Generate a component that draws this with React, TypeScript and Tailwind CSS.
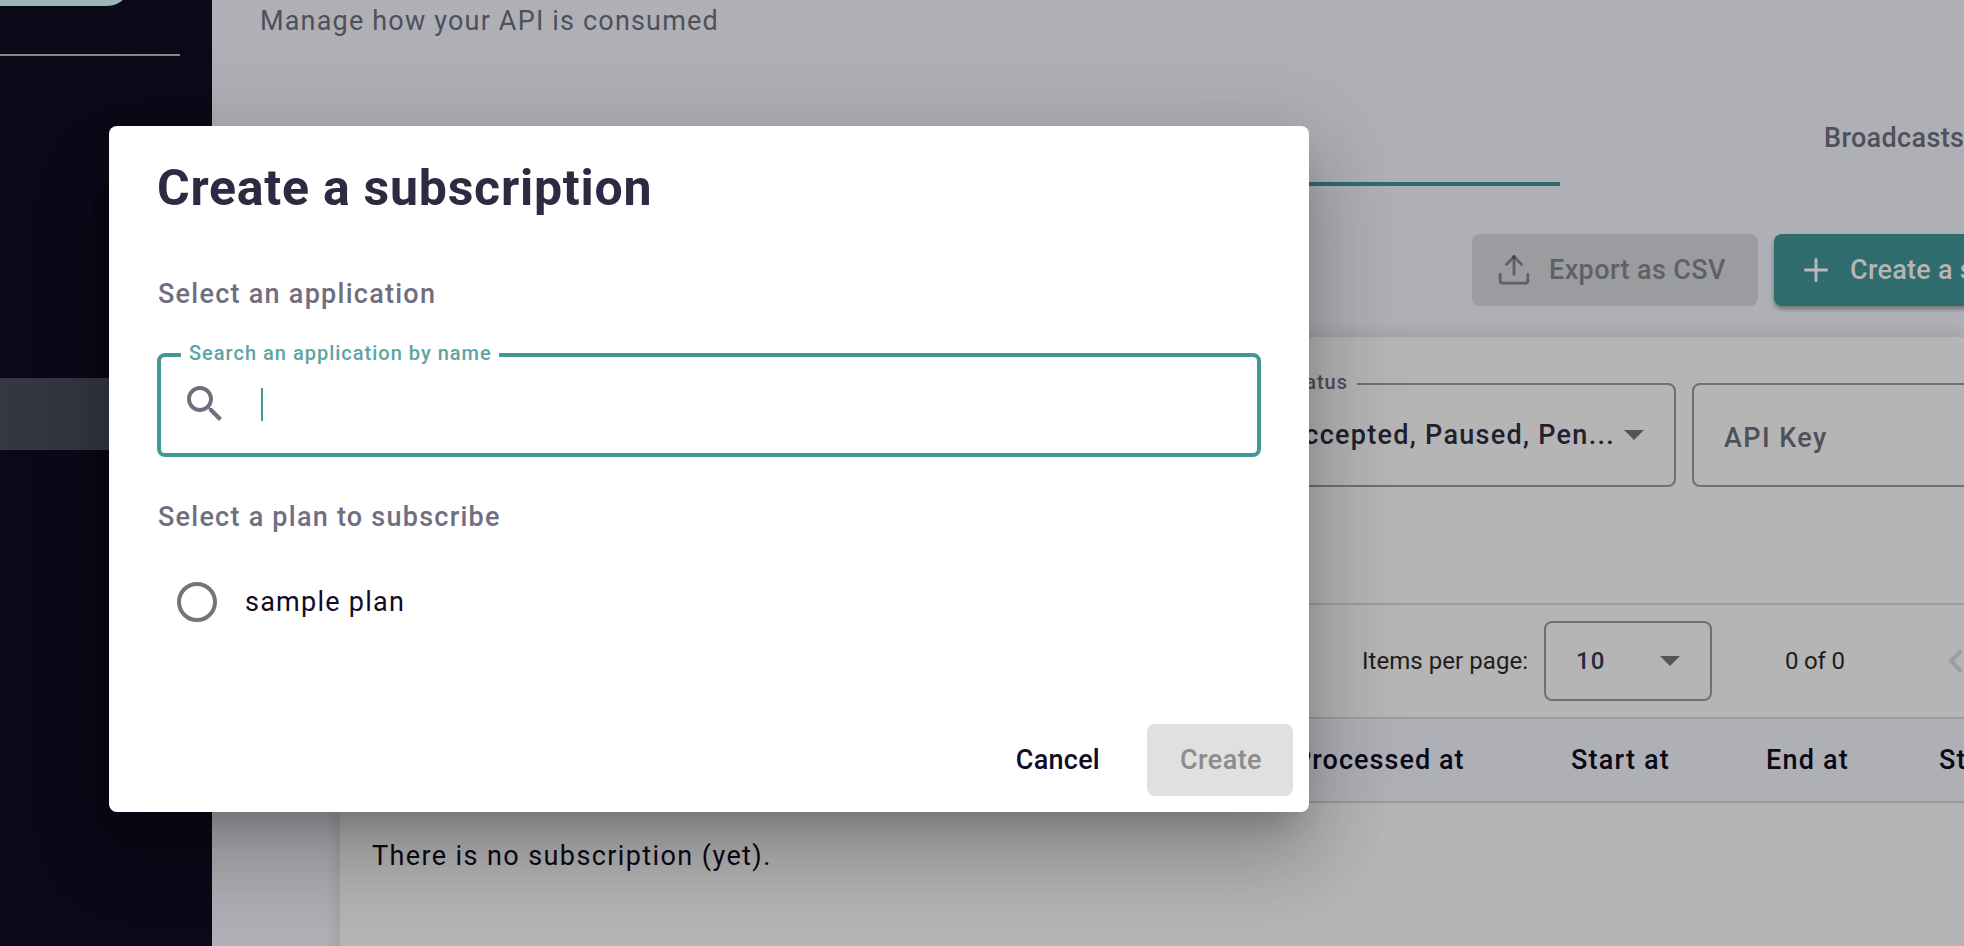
import type { ReactNode } from "react";

function UploadIcon() {
  return (
    <svg width="32" height="32" viewBox="0 0 32 32" fill="none" stroke="#606163" strokeWidth="2.8" strokeLinecap="round" strokeLinejoin="round">
      <path d="M2.2 20.5v6.3c0 1.5 1 2.4 2.4 2.4h22.8c1.4 0 2.4-.9 2.4-2.4v-6.3" />
      <path d="M8.4 10.4 16 2.8l7.6 7.6" />
      <path d="M16 3v17.6" />
      <circle cx="16" cy="3.2" r="0.9" stroke="#404143" strokeWidth="2" />
    </svg>
  );
}

function PlusIcon() {
  return (
    <svg width="26" height="26" viewBox="0 0 26 26" fill="none" stroke="#b7b9ba" strokeWidth="3" strokeLinecap="round">
      <path d="M13 2.4v21.2M2.4 13h21.2" />
    </svg>
  );
}

function SearchIcon() {
  return (
    <svg width="48" height="48" viewBox="0 0 24 24" fill="#706e7f">
      <path d="M15.5 14h-.79l-.28-.27C15.41 12.59 16 11.11 16 9.5 16 5.91 13.09 3 9.5 3S3 5.91 3 9.5 5.91 16 9.5 16c1.61 0 3.09-.59 4.23-1.57l.27.28v.79l5 4.99L20.49 19l-4.99-5zm-6 0C7.01 14 5 11.99 5 9.5S7.01 5 9.5 5 14 7.01 14 9.5 11.99 14 9.5 14z" />
    </svg>
  );
}

function Caret() {
  return (
    <svg width="20" height="10" viewBox="0 0 20 10" fill="#555555">
      <path d="M0 0h20L10 10z" />
    </svg>
  );
}

function OutlinedField({ label, className, children }: { label?: ReactNode; className: string; children: ReactNode }) {
  return (
    <div className={`relative flex shrink-0 items-center rounded-lg border-2 border-[#707070] ${className}`}>
      {label}
      {children}
    </div>
  );
}

function Sidebar() {
  return (
    <aside className="flex w-[212px] shrink-0 flex-col bg-[#0c0919]">
      <div className="h-1.5 w-[131px] overflow-hidden">
        <div className="-mt-14 h-[62px] rounded-br-3xl bg-[#9fb4b7]" />
      </div>
      <div className="mt-12 h-0.5 w-[180px] bg-[#87868b]" />
      <div className="mt-[322px] h-[72px] bg-[#353743]" />
    </aside>
  );
}

function SubscriptionsCard() {
  return (
    <section className="ml-32 mt-[31px] flex h-[640px] shrink-0 flex-col bg-[#b5b5b5] shadow-[0_0_16px_rgba(0,0,0,0.16)]">
      <div className="ml-[912px] flex pt-[46px]">
        <OutlinedField
          className="h-[104px] w-[424px] justify-end pr-[30px]"
          label={
            <span className="absolute -top-[17px] right-[317px] bg-[#b5b5b5] pl-2 pr-[9px] text-[20px] leading-7 font-medium tracking-[1px] text-[#504f5c]">
              Status
            </span>
          }
        >
          <span className="mr-[9px] text-[27px] font-medium tracking-[1.28px] text-[#211f30]">Accepted, Paused, Pen...</span>
          <Caret />
        </OutlinedField>
        <OutlinedField className="ml-4 h-[104px] w-[424px] pl-[30px] pt-1.5">
          <span className="text-[27px] font-medium tracking-[1.42px] text-[#504f5c]">API Key</span>
        </OutlinedField>
      </div>

      <div className="mt-[116px] flex h-[116px] items-center border-y-2 border-[#9d9d9d] pl-[1022px] text-[24px] text-[#1d1d1d]">
        <span className="w-[182px] tracking-[0.05px]">Items per page:</span>
        <OutlinedField className="h-20 w-[168px] pl-[30px]">
          <span className="w-[84px] font-medium tracking-[1.2px] text-[#2a283b]">10</span>
          <Caret />
        </OutlinedField>
        <span className="ml-[73px] w-[163px] tracking-[-0.2px]">0 of 0</span>
        <svg className="shrink-0" width="15" height="24" viewBox="0 0 15 24" fill="none" stroke="#9d9d9d" strokeWidth="4">
          <path d="M13.5 1.4 3 12l10.5 10.6" />
        </svg>
      </div>

      <div className="flex h-[84px] items-center border-b-2 border-[#98999d] bg-[#afb0b5] pl-[954px] pt-px text-[27px] font-medium tracking-[1.2px] text-[#0b0819]">
        <span className="w-[277px] shrink-0 tracking-[1.05px]">Processed at</span>
        <span className="w-[195px] shrink-0">Start at</span>
        <span className="w-[173px] shrink-0">End at</span>
        <span className="shrink-0">Status</span>
      </div>

      <div className="flex h-[106px] items-center pl-8 text-[27px] tracking-[1.4px] text-[#0b0819]">There is no subscription (yet).</div>
    </section>
  );
}

function ApiPage() {
  return (
    <main className="flex w-[1752px] shrink-0 flex-col bg-[#afb0b5]">
      <p className="h-[90px] shrink-0 pl-12 text-[27px] leading-[42px] tracking-[1.18px] text-[#504f5c]">Manage how your API is consumed</p>
      <nav className="flex h-24 shrink-0 text-[27px] font-medium">
        <div className="w-[1348px] shrink-0 border-b-4 border-[#2f6c6d]" />
        <div className="flex shrink-0 items-center pl-[264px] tracking-[0.35px] text-[#504f5c]">Broadcasts</div>
      </nav>
      <div className="mt-12 flex shrink-0 pl-[1260px] text-[27px] font-medium">
        <div className="flex h-[72px] w-[286px] shrink-0 items-center rounded-lg bg-[#9b9ca0] pl-[26px] text-[#606163]">
          <UploadIcon />
          <span className="ml-[19px] tracking-[0.39px]">Export as CSV</span>
        </div>
        <div className="ml-4 flex h-[72px] w-[420px] shrink-0 items-center rounded-lg bg-[#2f6c6d] pl-[29px] whitespace-nowrap text-[#b5b5b5] shadow-[0_3px_4px_rgba(0,0,0,0.35)]">
          <PlusIcon />
          <span className="ml-[21px] tracking-[0.27px]">Create a subscription</span>
        </div>
      </div>
      <SubscriptionsCard />
    </main>
  );
}

function CreateSubscriptionDialog() {
  return (
    <div
      role="dialog"
      className="absolute left-[109px] top-[126px] flex h-[686px] w-[1200px] flex-col rounded-lg bg-white px-12 pb-4 pt-8 shadow-[0_22px_30px_-14px_rgba(0,0,0,0.2),0_48px_76px_6px_rgba(0,0,0,0.14),0_18px_92px_16px_rgba(0,0,0,0.12)]"
    >
      <h2 className="text-[50px] leading-[60px] font-bold tracking-[0.75px] text-[#2d2b42]">Create a subscription</h2>

      <h3 className="mt-[60px] pl-px text-[27px] leading-8 font-medium tracking-[1.26px] text-[#706e7f]">Select an application</h3>
      <div className="relative mt-[43px] flex h-[104px] w-[1104px] shrink-0 items-center rounded-lg border-4 border-[#439795] pb-0.5 pl-5">
        <label className="absolute -top-[18px] left-5 bg-white pl-2 pr-[7px] text-[20px] leading-7 font-medium tracking-[1px] text-[#5da4a2]">
          Search an application by name
        </label>
        <SearchIcon />
        <div className="ml-8 h-[33px] w-0.5 bg-[#439795]" />
      </div>

      <h3 className="mt-11 pl-px text-[27px] leading-8 font-medium tracking-[1.24px] text-[#706e7f]">Select a plan to subscribe</h3>
      <div className="mt-[49px] flex items-center pl-5">
        <span className="h-10 w-10 rounded-full border-4 border-[#757575]" />
        <span className="ml-7 text-[27px] leading-10 tracking-[1.25px] text-[#100c27]">sample plan</span>
      </div>

      <div className="-mr-8 mt-[102px] flex items-center justify-end text-[27px] font-medium">
        <button className="mr-[47px] tracking-[0.25px] text-[#100c27]">Cancel</button>
        <button className="h-[72px] w-[146px] rounded-lg bg-[#e0e0e0] pl-0.5 tracking-[0.41px] text-[#8c8c8c]">Create</button>
      </div>
    </div>
  );
}

export default function App() {
  return (
    <div className="relative flex h-[946px] w-[1964px] overflow-hidden bg-[#afb0b5] font-[Roboto,sans-serif]">
      <Sidebar />
      <ApiPage />
      <CreateSubscriptionDialog />
    </div>
  );
}
